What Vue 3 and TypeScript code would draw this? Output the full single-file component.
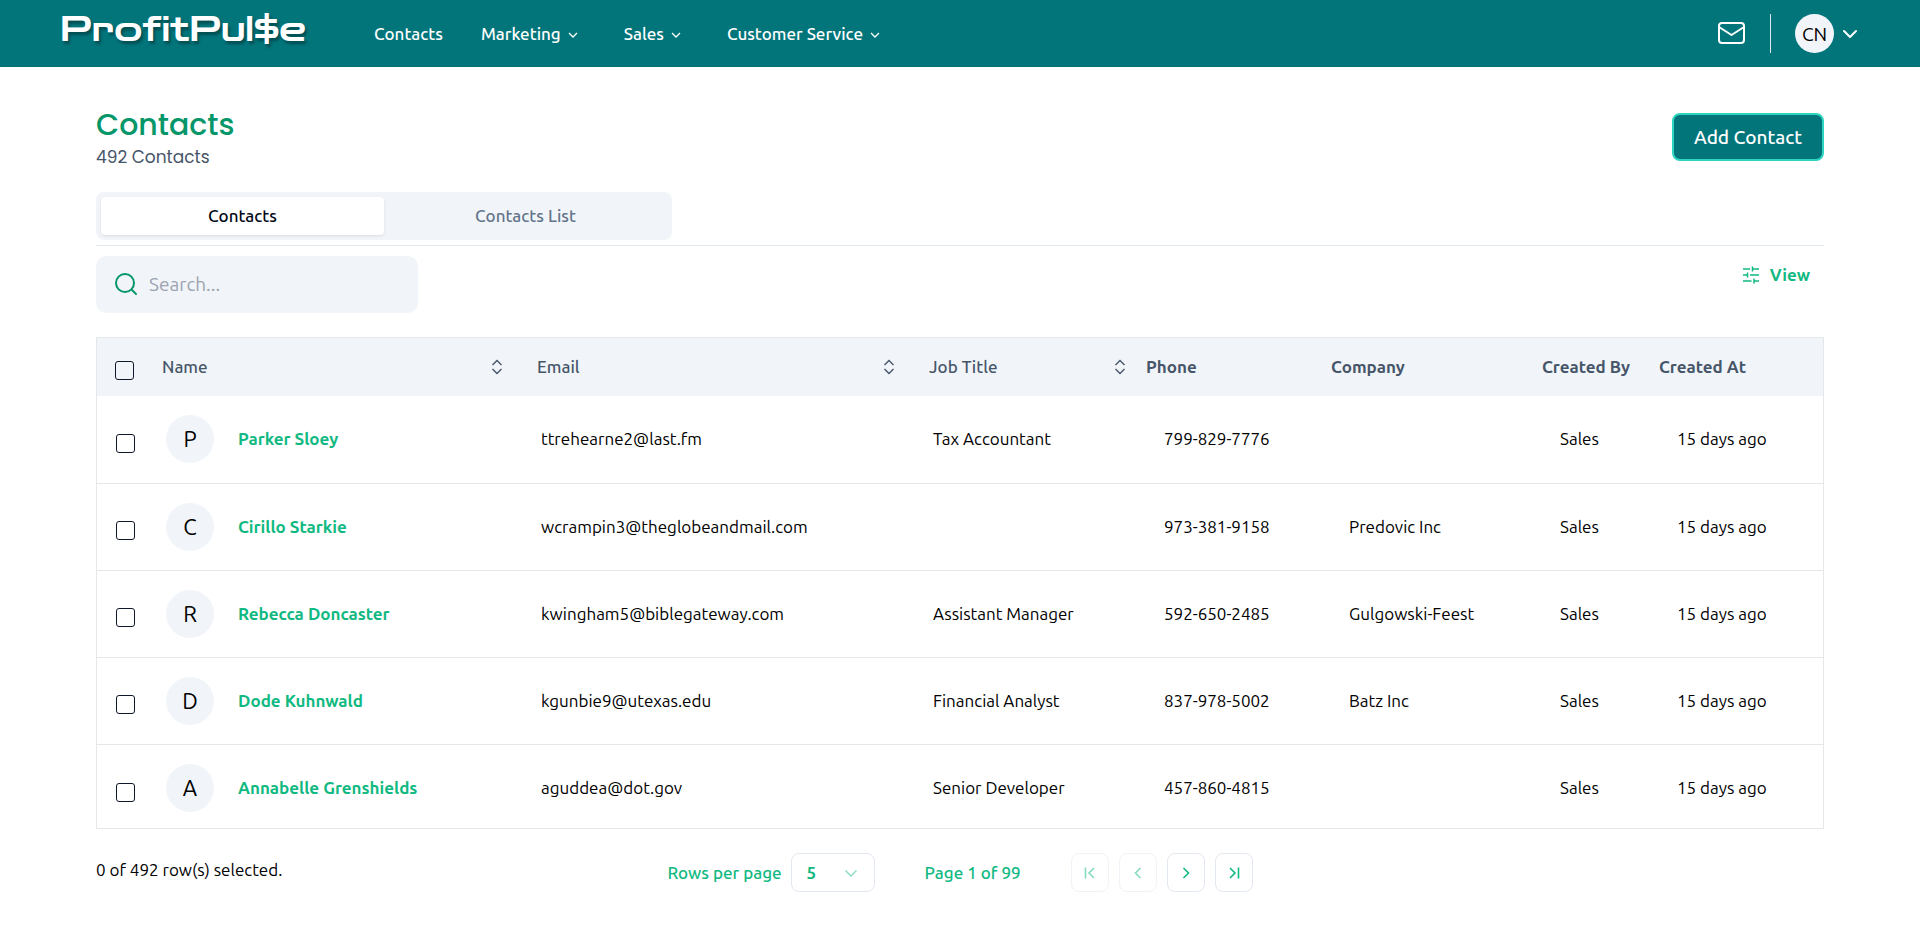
<script setup lang="ts">
import { ref, computed } from 'vue'

interface Contact {
  id: number
  name: string
  email: string
  job: string
  phone: string
  company: string
  createdBy: string
  createdAt: string
}

const contacts: Contact[] = [
  { id: 1, name: 'Parker Sloey', email: 'ttrehearne2@last.fm', job: 'Tax Accountant', phone: '799-829-7776', company: '', createdBy: 'Sales', createdAt: '15 days ago' },
  { id: 2, name: 'Cirillo Starkie', email: 'wcrampin3@theglobeandmail.com', job: '', phone: '973-381-9158', company: 'Predovic Inc', createdBy: 'Sales', createdAt: '15 days ago' },
  { id: 3, name: 'Rebecca Doncaster', email: 'kwingham5@biblegateway.com', job: 'Assistant Manager', phone: '592-650-2485', company: 'Gulgowski-Feest', createdBy: 'Sales', createdAt: '15 days ago' },
  { id: 4, name: 'Dode Kuhnwald', email: 'kgunbie9@utexas.edu', job: 'Financial Analyst', phone: '837-978-5002', company: 'Batz Inc', createdBy: 'Sales', createdAt: '15 days ago' },
  { id: 5, name: 'Annabelle Grenshields', email: 'aguddea@dot.gov', job: 'Senior Developer', phone: '457-860-4815', company: '', createdBy: 'Sales', createdAt: '15 days ago' },
]

const total = 492
const menus = ['Marketing', 'Sales', 'Customer Service']
const sortable = ['Name', 'Email', 'Job Title']
const plain = ['Phone', 'Company', 'Created By', 'Created At']
const tabs = ['Contacts', 'Contacts List']

const activeTab = ref('Contacts')
const search = ref('')
const pageSize = ref(5)
const selected = ref<number[]>([])

const allSelected = computed<boolean>({
  get: () => selected.value.length === contacts.length,
  set: (on) => {
    selected.value = on ? contacts.map((c) => c.id) : []
  },
})
</script>

<template>
  <div class="page">
    <header class="topbar">
      <a class="logo" href="#">ProfitPul$e</a>
      <nav class="nav">
        <a class="nav-item" href="#">Contacts</a>
        <button v-for="m in menus" :key="m" type="button" class="nav-item">
          {{ m }}
          <svg width="12" height="12" viewBox="0 0 12 12" fill="none" stroke="currentColor" stroke-width="1.300"><path d="M2 5l4 4 4-4" /></svg>
        </button>
      </nav>
      <div class="account">
        <button type="button" class="icon-btn" aria-label="Messages">
          <svg width="30" height="26" viewBox="0 0 30 26" fill="none" stroke="currentColor" stroke-width="2" stroke-linejoin="round">
            <rect x="3" y="2" width="25" height="20" rx="3" />
            <path d="M3 6l12.500 8L28 6" />
          </svg>
        </button>
        <span class="divider"></span>
        <button type="button" class="user">
          <span class="user-avatar">CN</span>
          <svg width="16" height="16" viewBox="0 0 16 16" fill="none" stroke="currentColor" stroke-width="2" stroke-linecap="round" stroke-linejoin="round"><path d="M2 5l6 6 6-6" /></svg>
        </button>
      </div>
    </header>

    <main class="content">
      <div class="title-row">
        <div>
          <h1>Contacts</h1>
          <p class="subtitle">{{ total }} Contacts</p>
        </div>
        <button type="button" class="add">Add Contact</button>
      </div>

      <div class="tabs" role="tablist">
        <button
          v-for="t in tabs"
          :key="t"
          type="button"
          role="tab"
          class="tab"
          :class="{ active: activeTab === t }"
          :aria-selected="activeTab === t"
          @click="activeTab = t"
        >{{ t }}</button>
      </div>

      <div class="toolbar">
        <label class="search">
          <svg width="24" height="24" viewBox="0 0 24 24" fill="none" stroke="currentColor" stroke-width="2" stroke-linecap="round"><circle cx="11" cy="11" r="9" /><path d="M18 18l4 4" /></svg>
          <input v-model="search" type="text" placeholder="Search..." aria-label="Search contacts" />
        </label>
        <button type="button" class="view">
          <svg width="18" height="18" viewBox="0 0 18 18" fill="none" stroke="currentColor" stroke-width="1.500">
            <path d="M1 3h7M10.500 3H17M10.500 0.500v5M1 9h4.500M8 9h9M5.500 6.500v5M1 15h8.500M12 15h5M12 12.500v5" />
          </svg>
          View
        </button>
      </div>

      <div class="table-box">
        <table>
          <colgroup>
            <col class="c-check" /><col class="c-name" /><col class="c-email" /><col class="c-job" />
            <col class="c-phone" /><col class="c-company" /><col class="c-by" /><col class="c-at" />
          </colgroup>
          <thead>
            <tr>
              <th class="check"><input v-model="allSelected" type="checkbox" aria-label="Select all" /></th>
              <th v-for="h in sortable" :key="h" class="sort">
                <button type="button">
                  {{ h }}
                  <svg width="16" height="16" viewBox="0 0 16 16" fill="none" stroke="currentColor" stroke-width="1.400"><path d="M3.500 6L8 1.500 12.500 6M3.500 10L8 14.500l4.500-4.500" /></svg>
                </button>
              </th>
              <th v-for="h in plain" :key="h">{{ h }}</th>
            </tr>
          </thead>
          <tbody>
            <tr v-for="c in contacts" :key="c.id">
              <td class="check"><input v-model="selected" type="checkbox" :value="c.id" :aria-label="'Select ' + c.name" /></td>
              <td class="near">
                <div class="person">
                  <span class="avatar">{{ c.name[0] }}</span>
                  <a href="#">{{ c.name }}</a>
                </div>
              </td>
              <td class="near">{{ c.email }}</td>
              <td class="near">{{ c.job }}</td>
              <td>{{ c.phone }}</td>
              <td>{{ c.company }}</td>
              <td>{{ c.createdBy }}</td>
              <td>{{ c.createdAt }}</td>
            </tr>
          </tbody>
        </table>
      </div>

      <footer class="footer">
        <p class="count">{{ selected.length }} of {{ total }} row(s) selected.</p>
        <div class="pager">
          <label for="page-size">Rows per page</label>
          <div class="select">
            <select id="page-size" v-model="pageSize">
              <option :value="5">5</option>
              <option :value="10">10</option>
              <option :value="20">20</option>
            </select>
            <svg width="16" height="16" viewBox="0 0 16 16" fill="none" stroke="currentColor" stroke-width="1.300"><path d="M2.500 5.500L8 11l5.500-5.500" /></svg>
          </div>
          <span class="page-no">Page 1 of 99</span>
          <div class="page-btns">
            <button type="button" disabled aria-label="First page"><svg viewBox="0 0 16 16"><path d="M3.500 2.500v11M12 3L7 8l5 5" /></svg></button>
            <button type="button" disabled aria-label="Previous page"><svg viewBox="0 0 16 16"><path d="M10.500 3l-5 5 5 5" /></svg></button>
            <button type="button" aria-label="Next page"><svg viewBox="0 0 16 16"><path d="M5.500 3l5 5-5 5" /></svg></button>
            <button type="button" aria-label="Last page"><svg viewBox="0 0 16 16"><path d="M4 3l5 5-5 5M12.500 2.500v11" /></svg></button>
          </div>
        </div>
      </footer>
    </main>
  </div>
</template>

<style>
body {
  margin: 0;
  background: #fff;
}
</style>

<style scoped>
.page {
  font-family: Ubuntu, "Noto Sans", "Open Sans", sans-serif;
  font-size: 17px;
  line-height: 24px;
  color: #000;
}
.page * {
  box-sizing: border-box;
}
button,
input,
select {
  font: inherit;
  color: inherit;
  margin: 0;
}
button {
  border: 0;
  padding: 0;
  background: none;
  cursor: pointer;
}
a {
  color: inherit;
  text-decoration: none;
}
svg {
  flex: none;
}
.topbar {
  display: flex;
  align-items: center;
  height: 67px;
  padding: 0 62px 0 60px;
  background: #02757b;
  color: #fff;
}
.logo {
  width: 314px;
  padding-bottom: 8px;
  font-family: "Zen Dots", Orbitron, "DejaVu Sans", sans-serif;
  font-size: 34px;
  font-weight: 400;
  line-height: 44px;
  text-shadow: 2px 3px 3px rgba(0, 0, 0, 0.35);
}
.nav {
  display: flex;
  gap: 38px;
  font-weight: 500;
}
.nav-item {
  display: flex;
  align-items: center;
  gap: 6px;
}
.nav-item + .nav-item + .nav-item {
  margin-left: 7px;
}
.account {
  display: flex;
  align-items: center;
  margin-left: auto;
}
.icon-btn {
  display: flex;
}
.divider {
  width: 1px;
  height: 39px;
  margin: 0 24px;
  background: #e2e8f0;
}
.user {
  display: flex;
  align-items: center;
  gap: 8px;
}
.user-avatar {
  display: flex;
  align-items: center;
  justify-content: center;
  width: 39px;
  height: 39px;
  border-radius: 50%;
  background: #f1f5f9;
  color: #000;
  font-size: 19px;
}
.content {
  padding: 40px 96px 0;
}
.title-row {
  display: flex;
  justify-content: space-between;
  align-items: flex-start;
}
h1 {
  margin: 0;
  font-family: Poppins, Inter, sans-serif;
  font-size: 30px;
  font-weight: 500;
  line-height: 36px;
  color: #059669;
}
.subtitle {
  margin: 0;
  font-family: Poppins, Inter, sans-serif;
  line-height: 28px;
  color: #475569;
}
.add {
  margin-top: 6px;
  padding: 0 20px;
  height: 48px;
  border: 2px solid #2dd4bf;
  border-radius: 8px;
  background: #02757b;
  color: #fff;
  font-size: 19px;
  font-weight: 500;
}
.tabs {
  display: grid;
  grid-template-columns: 1fr 1fr;
  width: 576px;
  height: 48px;
  margin-top: 21px;
  padding: 5px;
  border-radius: 8px;
  background: #f1f5f9;
}
.tab {
  border-radius: 4px;
  color: #64748b;
  font-weight: 500;
}
.tab.active {
  background: #fff;
  color: #020817;
  box-shadow: 0 1px 3px rgba(0, 0, 0, 0.1);
}
.toolbar {
  display: flex;
  justify-content: space-between;
  align-items: flex-start;
  margin-top: 5px;
  padding-top: 10px;
  border-top: 1px solid #e2e8f0;
}
.search {
  display: flex;
  align-items: center;
  gap: 11px;
  width: 322px;
  height: 57px;
  padding: 0 18px 2px;
  border-radius: 10px;
  background: #f1f5f9;
  color: #059669;
}
.search input {
  min-width: 0;
  flex: 1;
  padding: 0;
  border: 0;
  outline: 0;
  background: none;
  color: #020817;
  font-size: 19px;
}
.search input::placeholder {
  color: #9ca3af;
}
.view {
  display: flex;
  align-items: center;
  gap: 10px;
  margin: 7px 14px 0 0;
  color: #10b981;
  font-weight: 700;
}
.table-box {
  margin-top: 24px;
  border: 1px solid #e5e7eb;
}
table {
  width: 100%;
  border-collapse: collapse;
  table-layout: fixed;
}
.c-check { width: 49px; }
.c-name { width: 375px; }
.c-email { width: 392px; }
.c-job { width: 217px; }
.c-phone { width: 185px; }
.c-company { width: 211px; }
.c-by { width: 117px; }
.c-at { width: 180px; }
thead tr {
  height: 58px;
  background: #f1f5f9;
}
th {
  padding: 0 0 0 16px;
  text-align: left;
  color: #475569;
  font-weight: 700;
  white-space: nowrap;
}
.sort {
  padding-right: 16px;
}
.sort:nth-child(4) {
  padding-right: 2px;
}
.sort button {
  display: flex;
  align-items: center;
  justify-content: space-between;
  width: 100%;
  font-weight: 500;
}
tbody tr {
  height: 87px;
  border-bottom: 1px solid #e5e7eb;
}
tbody tr:last-child {
  height: 84px;
  border-bottom: 0;
}
td {
  padding: 0 0 0 34px;
}
td.near {
  padding-left: 20px;
}
th.check {
  padding: 6px 0 0 18px;
}
td.check {
  padding: 8px 0 0 19px;
}
tbody tr:last-child td {
  padding-top: 4px;
}
tbody tr:last-child td.check {
  padding-top: 12px;
}
.check input {
  display: block;
  appearance: none;
  width: 19px;
  height: 19px;
  border: 1px solid #0f172a;
  border-radius: 3px;
}
.check input:checked {
  background: #0f172a;
}
.person {
  display: flex;
  align-items: center;
  gap: 24px;
  color: #10b981;
  font-weight: 700;
}
.avatar {
  display: flex;
  align-items: center;
  justify-content: center;
  width: 48px;
  height: 48px;
  border-radius: 50%;
  background: #f1f5f9;
  color: #000;
  font-size: 22px;
  font-weight: 400;
}
.footer {
  display: grid;
  grid-template-columns: 1fr auto 1fr;
  align-items: center;
  margin-top: 24px;
}
.count {
  margin: 0 0 5px;
}
.pager {
  display: flex;
  align-items: center;
  color: #10b981;
  font-weight: 500;
}
.select {
  position: relative;
  margin: 0 50px 0 9px;
}
.select select {
  display: block;
  appearance: none;
  width: 84px;
  height: 39px;
  padding: 0 15px;
  border: 1px solid #e2e8f0;
  border-radius: 8px;
  background: #fff;
  font-weight: 700;
}
.select svg {
  position: absolute;
  right: 16px;
  top: 12px;
  opacity: 0.5;
  pointer-events: none;
}
.page-btns {
  display: flex;
  gap: 10px;
  margin-left: 50px;
}
.page-btns button {
  display: flex;
  align-items: center;
  justify-content: center;
  width: 38px;
  height: 39px;
  border: 1px solid #e2e8f0;
  border-radius: 8px;
}
.page-btns button:disabled {
  opacity: 0.5;
  cursor: default;
}
.page-btns svg {
  width: 16px;
  height: 16px;
  fill: none;
  stroke: currentColor;
  stroke-width: 1.600;
}
</style>
